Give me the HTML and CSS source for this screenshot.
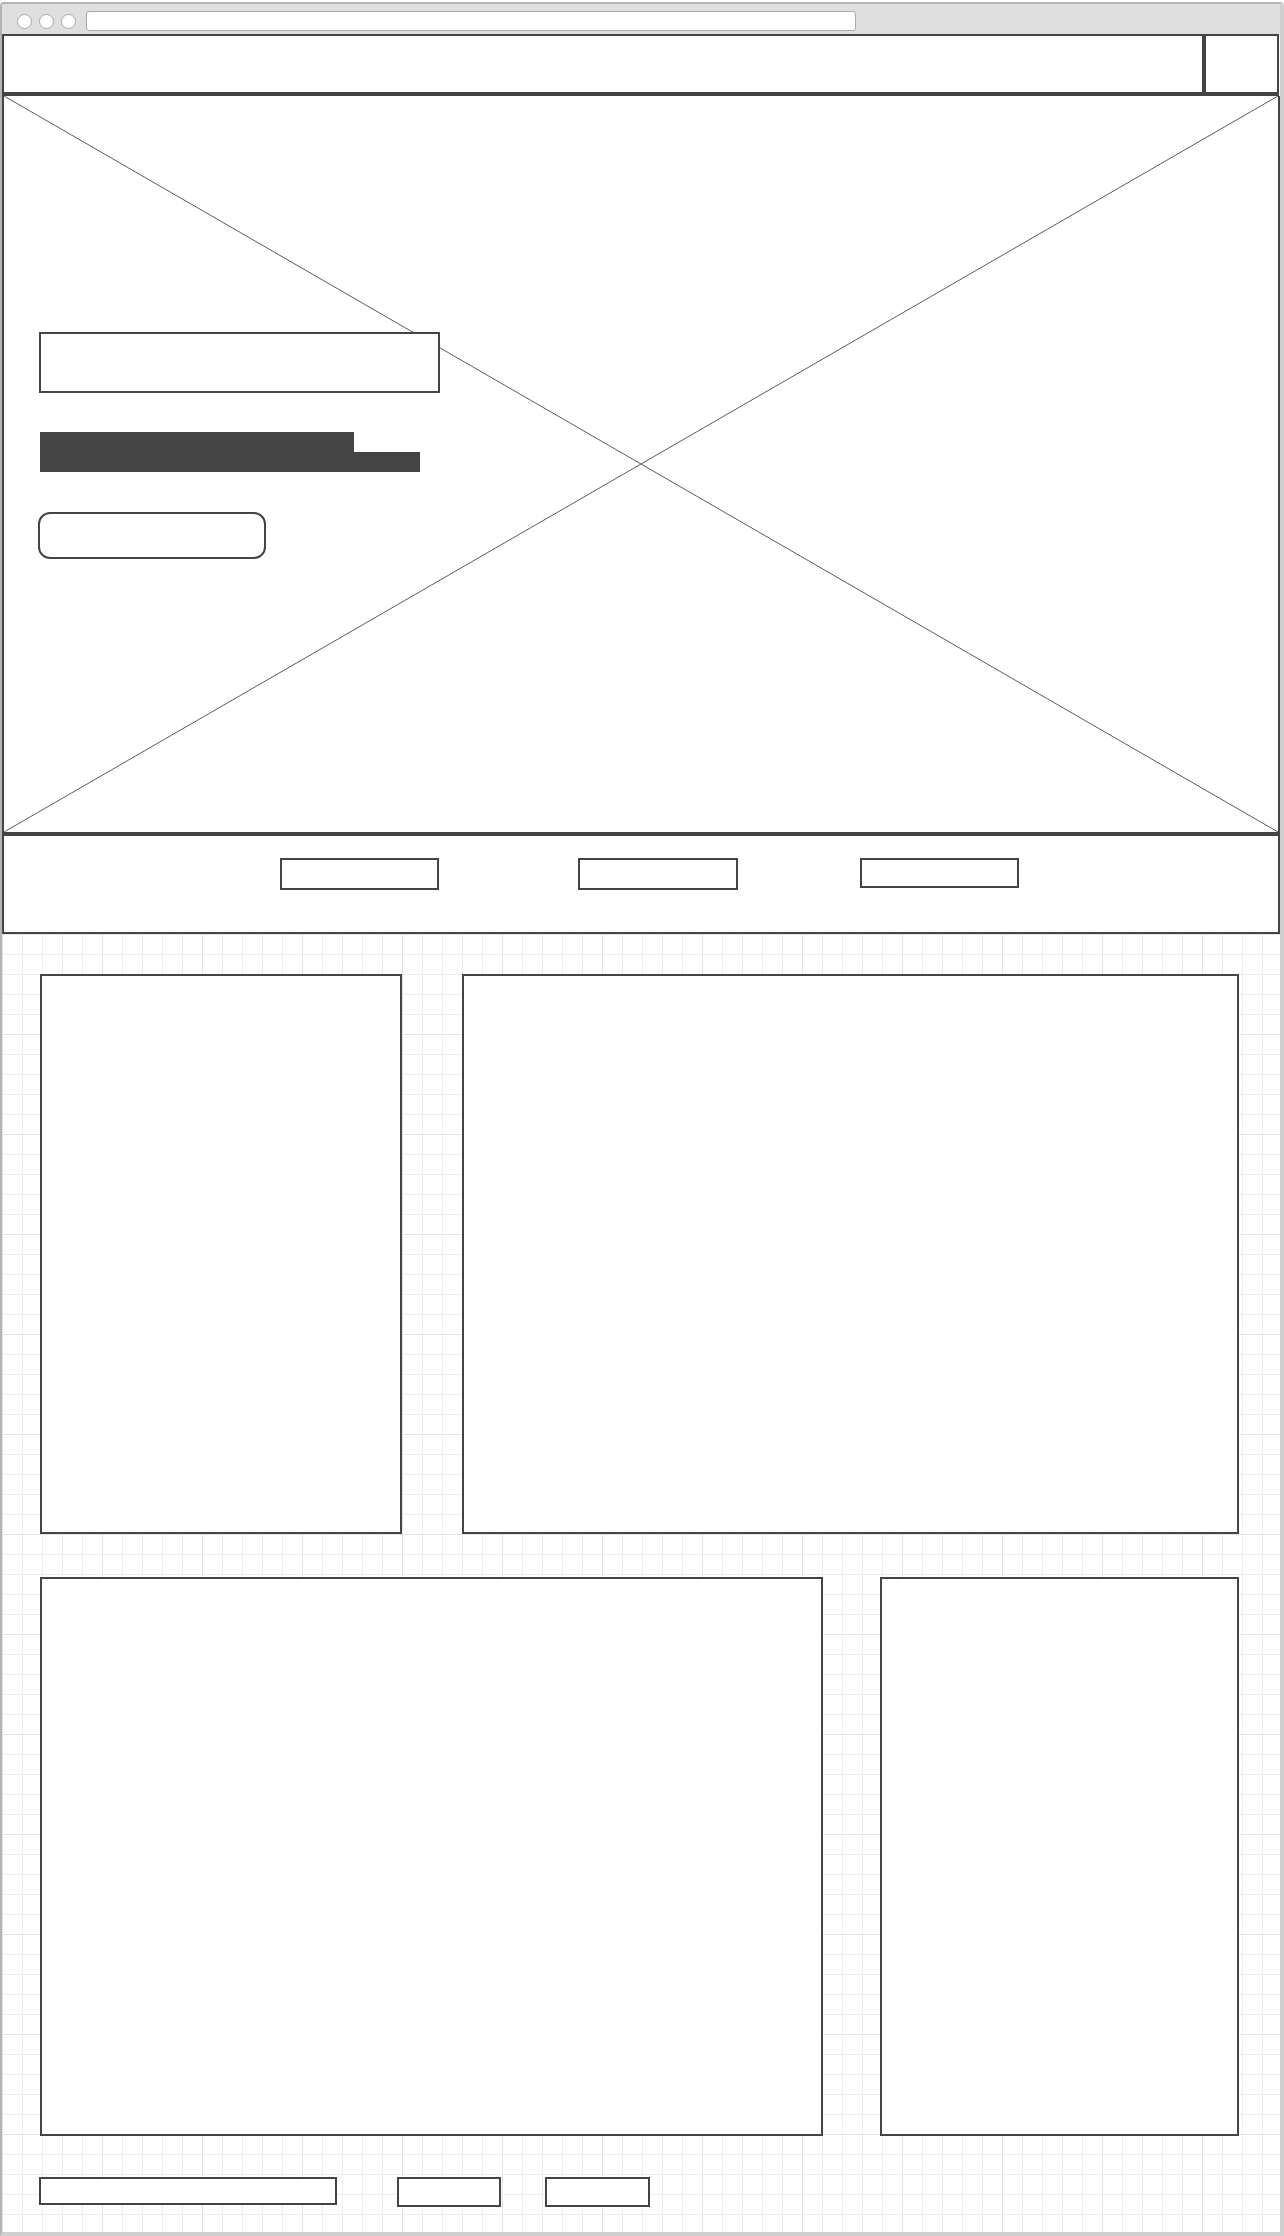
FILE: index.html
```html
<!DOCTYPE html>
<html>
<head>
    <title>Landing Page Wireframe</title>
    <link rel="stylesheet" href="styles.css">
</head>
<body>
    <div class="window">
        <div class="chrome">
            <span class="dot"></span>
            <span class="dot"></span>
            <span class="dot"></span>
            <div class="url-bar"></div>
        </div>

        <div class="header">
            <div class="header-main"></div>
            <div class="header-side"></div>
        </div>

        <div class="hero">
            <!-- image placeholder cross -->
            <svg class="hero-cross" xmlns="http://www.w3.org/2000/svg">
                <line x1="0" y1="0" x2="100%" y2="100%" />
                <line x1="100%" y1="0" x2="0" y2="100%" />
            </svg>
            <div class="hero-content">
                <div class="title-box"></div>
                <div class="text-block">
                    <div class="text-line short"></div>
                    <div class="text-line long"></div>
                </div>
                <div class="cta"></div>
            </div>
        </div>

        <div class="nav">
            <div class="nav-item first"></div>
            <div class="nav-item second"></div>
            <div class="nav-item third"></div>
        </div>

        <div class="canvas">
            <div class="row top-row">
                <div class="card card-a"></div>
                <div class="card card-b"></div>
            </div>
            <div class="row bottom-row">
                <div class="card card-c"></div>
                <div class="card card-d"></div>
            </div>
            <div class="footer-links">
                <div class="foot-item wide"></div>
                <div class="foot-item small"></div>
                <div class="foot-item small last"></div>
            </div>
        </div>
    </div>
</body>
</html>
```

FILE: styles.css
```css
* { box-sizing: border-box; }
body { margin: 0; background: #fff; font-family: "Liberation Sans", Arial, sans-serif; }

.window { margin-top: 2px; width: 1284px; border: 2px solid #b4b4b4; border-right: 4px solid #cfcfcf; border-bottom: 4px solid #cfcfcf; border-radius: 4px 4px 0 0; background: #fff; }

/* browser chrome */
.chrome { height: 30px; background: #dedede; display: flex; align-items: flex-start; padding: 8px 0 0 15px; }
.dot { width: 15px; height: 15px; border: 1.5px solid #aaa; border-radius: 50%; background: #fff; margin-right: 7px; margin-top: 2px; }
.url-bar { width: 770px; height: 20px; margin-left: 3px; margin-top: -1px; border: 1.5px solid #aaa; border-radius: 3px; background: #fff; }

/* header bar */
.header { height: 62px; display: flex; border: 2px solid #444; border-bottom-width: 4px; margin-right: 1px; }
.header-main { flex: 1; }
.header-side { width: 75px; border-left: 4px solid #444; }

/* hero */
.hero { position: relative; height: 740px; border: 2px solid #444; border-top: none; border-bottom-width: 4px; padding: 236px 0 0 35px; }
.hero-cross { position: absolute; top: 0; left: 0; width: 100%; height: 100%; }
.hero-cross line { stroke: #5c5c5c; stroke-width: 1; }
.hero-content { position: relative; }
.title-box { width: 401px; height: 61px; border: 2px solid #444; background: #fff; }
.text-block { margin: 39px 0 0 1px; }
.text-line { height: 20px; background: #444; }
.text-line.short { width: 314px; }
.text-line.long { width: 380px; }
.cta { width: 228px; height: 47px; margin: 40px 0 0 -1px; border: 2px solid #444; border-radius: 12px; background: #fff; }

/* nav band */
.nav { height: 98px; display: flex; align-items: flex-start; border: 2px solid #444; border-top: none; padding: 22px 0 0 276px; }
.nav-item { width: 159px; height: 32px; border: 2px solid #444; }
.nav-item.second { margin-left: 139px; width: 160px; }
.nav-item.third { margin-left: 122px; height: 30px; }

/* grid canvas */
.canvas { padding: 40px 0 25px 38px; background-color: #fff;
    background-image:
        linear-gradient(#e3e3e3 1px, transparent 1px),
        linear-gradient(90deg, #e3e3e3 1px, transparent 1px),
        linear-gradient(#eeeeee 1px, transparent 1px),
        linear-gradient(90deg, #eeeeee 1px, transparent 1px);
    background-size: 100px 100px, 100px 100px, 20px 20px, 20px 20px; }
.row { display: flex; }
.card { border: 2px solid #444; background: #fff; }
.top-row { height: 560px; }
.card-a { width: 362px; }
.card-b { width: 777px; margin-left: 60px; }
.bottom-row { height: 559px; margin-top: 43px; }
.card-c { width: 783px; }
.card-d { width: 359px; margin-left: 57px; }

.footer-links { display: flex; align-items: flex-start; margin-top: 41px; height: 30px; }
.foot-item { border: 2px solid #444; background: #fff; }
.foot-item.wide { width: 298px; height: 28px; margin-left: -1px; }
.foot-item.small { width: 104px; height: 30px; margin-left: 60px; }
.foot-item.last { width: 105px; margin-left: 44px; }
```
